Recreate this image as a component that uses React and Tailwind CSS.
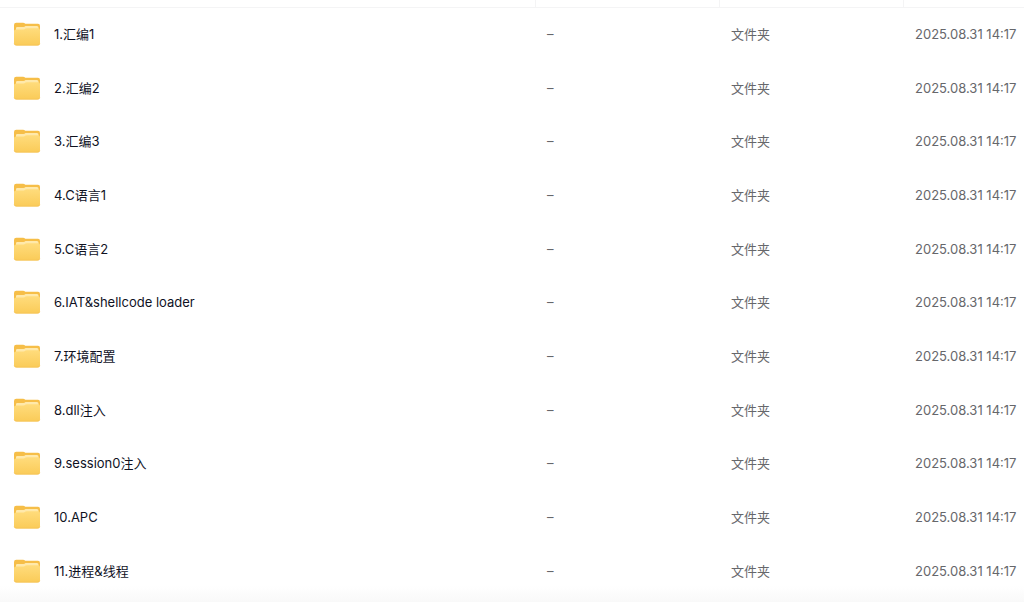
const files = [
  '1.汇编1',
  '2.汇编2',
  '3.汇编3',
  '4.C语言1',
  '5.C语言2',
  '6.IAT&shellcode loader',
  '7.环境配置',
  '8.dll注入',
  '9.session0注入',
  '10.APC',
  '11.进程&线程',
];

function FolderIcon() {
  return (
    <svg className="h-6 w-7 shrink-0" viewBox="0 0 28 24" aria-hidden="true">
      <defs>
        <linearGradient id="folder-front" x1="0" y1="0" x2="0" y2="1">
          <stop offset="0" stopColor="#ffdc7c" />
          <stop offset="1" stopColor="#facb58" />
        </linearGradient>
      </defs>
      <path d="M1 3Q1 0.800 3.200 0.800H10Q11.300 0.800 12.300 1.800H25Q27 1.800 27 4V12H1Z" fill="#f6be48" />
      <path d="M3 9V6.200Q3 5 4.200 5H10.500Q11.500 5 12.500 4H24Q25.500 4 25.500 5.500V9Z" fill="#ffe9ab" />
      <path d="M1 9Q1 7.500 3 7.500H10.500Q11.500 7.500 12.500 6.500Q13 6.200 14 6.200H25Q27 6.200 27 8V21Q27 23.500 24.500 23.500H3.500Q1 23.500 1 21Z" fill="url(#folder-front)" />
      <path d="M1.200 21.500Q1.600 23.200 3.500 23.200H24.500Q26.400 23.200 26.800 21.500" fill="none" stroke="#f3bd50" strokeWidth=".6" />
    </svg>
  );
}

export default function App() {
  return (
    <main className="min-h-screen bg-white bg-linear-to-t from-[#f9f9f9] to-white to-[16px] font-['Inter','Noto_Sans_CJK_SC',sans-serif] text-[13px] leading-5">
      <table className="w-full table-fixed border-collapse text-left" aria-label="文件列表">
        <colgroup>
          <col />
          <col className="w-[184px]" />
          <col className="w-[184px]" />
          <col className="w-[121px]" />
        </colgroup>
        <thead>
          <tr className="h-[7px] border-b border-[#f4f4f5]">
            <th scope="col" className="p-0" aria-label="文件名" />
            <th scope="col" className="border-l border-[#f4f4f5] p-0" aria-label="大小" />
            <th scope="col" className="border-l border-[#f4f4f5] p-0" aria-label="类型" />
            <th scope="col" className="border-l border-[#f4f4f5] p-0" aria-label="修改时间" />
          </tr>
        </thead>
        <tbody className="text-[#66676b]">
          {files.map((name) => (
            <tr key={name} className="h-[54px] nth-[3n+2]:h-[53px]">
              <td className="p-0 pl-[13px]">
                <a href="#" className="flex items-center gap-[13px] text-[#10121f]">
                  <FolderIcon />
                  <span>{name}</span>
                </a>
              </td>
              <td className="p-0 pl-3">–</td>
              <td className="p-0 pl-3">文件夹</td>
              <td className="p-0 pl-3 whitespace-nowrap">2025.08.31 14:17</td>
            </tr>
          ))}
        </tbody>
      </table>
    </main>
  );
}
